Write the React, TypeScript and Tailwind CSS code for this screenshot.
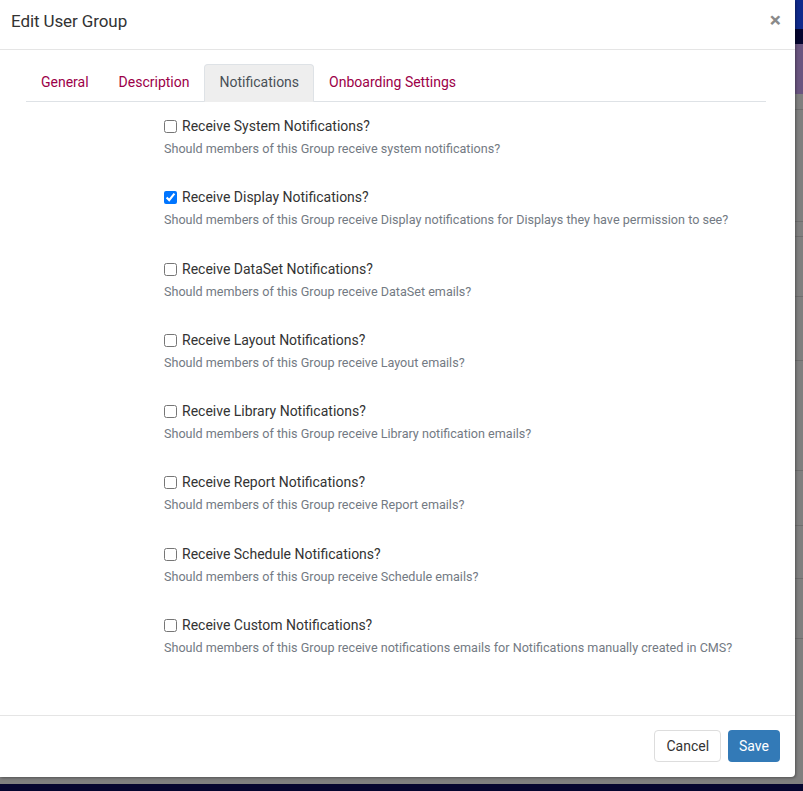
import React from 'react';

type Item = { label: string; help: string; checked?: boolean };

const items: Item[] = [
  { label: 'Receive System Notifications?', help: 'Should members of this Group receive system notifications?' },
  {
    label: 'Receive Display Notifications?',
    help: 'Should members of this Group receive Display notifications for Displays they have permission to see?',
    checked: true,
  },
  { label: 'Receive DataSet Notifications?', help: 'Should members of this Group receive DataSet emails?' },
  { label: 'Receive Layout Notifications?', help: 'Should members of this Group receive Layout emails?' },
  { label: 'Receive Library Notifications?', help: 'Should members of this Group receive Library notification emails?' },
  { label: 'Receive Report Notifications?', help: 'Should members of this Group receive Report emails?' },
  { label: 'Receive Schedule Notifications?', help: 'Should members of this Group receive Schedule emails?' },
  {
    label: 'Receive Custom Notifications?',
    help: 'Should members of this Group receive notifications emails for Notifications manually created in CMS?',
  },
];

const tabs = ['General', 'Description', 'Notifications', 'Onboarding Settings'];

const App: React.FC = () => {
  return (
    <div className="relative w-[803px] h-[791px] overflow-hidden font-['Roboto',sans-serif]">
      {/* dimmed page behind the modal */}
      <div className="flex flex-col h-full">
        <div className="h-[29px] bg-[#0f2a8c]" />
        <div className="h-[15px] bg-[#05052f]" />
        <div className="h-[50px] bg-[#6a5580]" />
        <div className="flex-1 flex flex-col bg-[#7f7f7f]">
          <div className="h-[16px] border-b border-[#6e6e6e]" />
          <div className="h-[112px] border-b border-[#6e6e6e]" />
          <div className="h-[15px] border-b border-[#6e6e6e]" />
          <div className="h-[60px] border-b border-[#6e6e6e]" />
          <div className="h-[64px] border-b border-[#6e6e6e]" />
          <div className="h-[110px] border-b border-[#6e6e6e]" />
          <div className="h-[55px] border-b border-[#6e6e6e]" />
          <div className="h-[53px] border-b border-[#6e6e6e]" />
          <div className="h-[60px] border-b border-[#6e6e6e]" />
        </div>
        <div className="h-[7px] bg-[#05052f]" />
      </div>

      {/* modal */}
      <div className="absolute left-0 top-0 w-[795px] h-[777px] bg-white rounded-br-[4px] shadow-[1px_1px_3px_rgba(0,0,0,0.35)] flex flex-col">
        <div className="h-[50px] border-b border-[#e5e5e5] flex items-start justify-between pl-[11px] pr-[14px] pt-[10px]">
          <h4 className="text-[17px] leading-[22px] text-[#333] tracking-[-0.1px]">Edit User Group</h4>
          <button className="text-[21px] leading-[18px] font-bold text-[#8a8a8a] mt-[1px]">×</button>
        </div>

        <div className="flex-1 ml-[26px] mr-[29px] pt-[14px]">
          <div className="flex border-b border-[#dee2e6] text-[14px] leading-[21px]">
            {tabs.map((t) => (
              <div
                key={t}
                className={
                  t === 'Notifications'
                    ? 'px-[14px] py-[7px] -mb-px bg-[#eeeeee] border border-[#dee2e6] border-b-[#eeeeee] rounded-t-[4px] text-[#495057]'
                    : 'px-[15px] py-[7px] border-y border-transparent text-[#9c0048]'
                }
              >
                {t}
              </div>
            ))}
          </div>

          <div className="pt-[14px] pl-[138px]">
            {items.map((it) => (
              <div key={it.label} className="h-[71.3px]">
                <label className="flex items-center gap-[5px] text-[14px] leading-[21px] text-[#333]">
                  <input type="checkbox" defaultChecked={it.checked} className="w-[13px] h-[13px] m-0" />
                  {it.label}
                </label>
                <p className="mt-[3px] text-[12.6px] leading-[18px] text-[#737a83]">{it.help}</p>
              </div>
            ))}
          </div>
        </div>

        <div className="border-t border-[#e5e5e5] h-[62px] flex items-start justify-end gap-[7px] pt-[14px] pr-[15px]">
          <button className="h-[32px] px-[11px] border border-[#dddddd] rounded-[4px] text-[14px] text-[#333] bg-white">
            Cancel
          </button>
          <button className="h-[32px] px-[11px] rounded-[4px] text-[14px] text-white bg-[#337ab7]">Save</button>
        </div>
      </div>
    </div>
  );
};

export default App;
